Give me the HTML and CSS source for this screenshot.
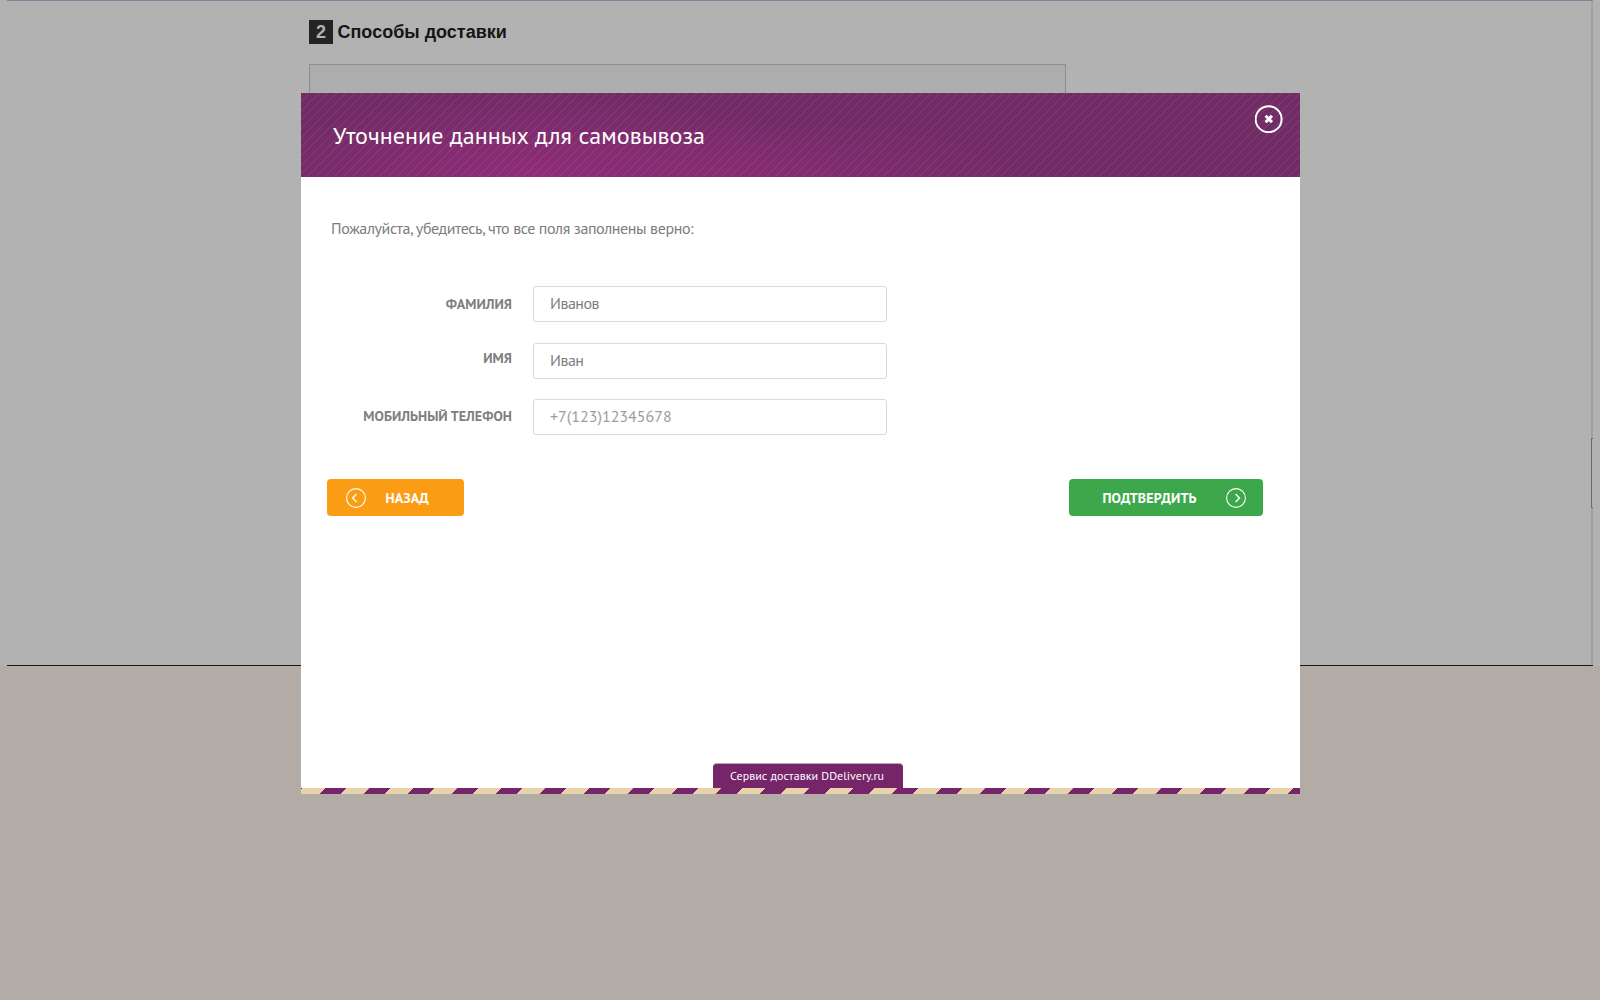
FILE: index.html
```html
<!DOCTYPE html>
<html lang="ru">
<head>
<meta charset="utf-8">
<title>Уточнение данных для самовывоза</title>
<link rel="stylesheet" href="styles.css">
</head>
<body>
<div class="page">
  <div class="shop">
    <div class="step"><span class="step-num">2</span><h2 class="step-title">Способы доставки</h2></div>
    <div class="methods"></div>
    <div class="scroll-track"><div class="scroll-thumb"></div></div>
  </div>
</div>
<div class="modal">
  <header class="modal-head">
    <h1 class="title">Уточнение данных для самовывоза</h1>
    <button class="close" aria-label="Закрыть">
      <svg width="28" height="28" viewBox="0 0 28 28"><circle cx="13.6" cy="14.2" r="13" fill="none" stroke="#fff" stroke-width="2"/><path d="M10.6 10.8l6.4 6.4M17 10.8l-6.4 6.4" stroke="#fff" stroke-width="3"/></svg>
    </button>
  </header>
  <main class="modal-body">
    <p class="intro">Пожалуйста, убедитесь, что все поля заполнены верно:</p>
    <form class="form">
      <div class="row"><label class="label">ФАМИЛИЯ</label><div class="field">Иванов</div></div>
      <div class="row"><label class="label up">ИМЯ</label><div class="field">Иван</div></div>
      <div class="row"><label class="label last">МОБИЛЬНЫЙ ТЕЛЕФОН</label><div class="field phone">+7(123)12345678</div></div>
    </form>
    <div class="actions">
      <button class="btn back">
        <svg width="20" height="20" viewBox="0 0 20 20" fill="none" stroke="#fff"><circle cx="10" cy="10" r="9.4" stroke-width="1.1"/><path d="M10.5 6L6.6 10l3.9 4" stroke-width="1.4"/></svg>
        <span>НАЗАД</span>
      </button>
      <button class="btn confirm">
        <span>ПОДТВЕРДИТЬ</span>
        <svg width="20" height="20" viewBox="0 0 20 20" fill="none" stroke="#fff"><circle cx="10" cy="10" r="9.4" stroke-width="1.1"/><path d="M9.6 6l3.9 4-3.9 4" stroke-width="1.4"/></svg>
      </button>
    </div>
    <div class="tab">Сервис доставки DDelivery.ru</div>
  </main>
  <div class="stripe"></div>
</div>
</body>
</html>
```
FILE: styles.css
```css
* { box-sizing: border-box; }
body {
  margin: 0;
  width: 1600px;
  height: 1000px;
  overflow: hidden;
  position: relative;
  background: #b3aba5;
  font-family: "PT Sans", "Noto Sans", sans-serif;
}
h1, h2, p { margin: 0; }
button { border: 0; padding: 0; background: none; font-family: inherit; color: #fff; }
svg { display: block; flex: none; }
.page { height: 666px; padding: 0 7px; background: #b2b2b2; }
.shop {
  position: relative;
  height: 666px;
  padding: 19px 0 0 302px;
  border-top: 1px solid #7b8799;
  border-bottom: 1px solid #1b1716;
}
.step { display: flex; align-items: center; height: 24px; gap: 4.5px; }
.step-num { width: 24px; height: 24px; background: #242424; color: #b2b2b2; font: bold 18px/24px "Liberation Sans", sans-serif; text-align: center; }
.step-title { font: bold 18px/24px "Liberation Sans", Arial, sans-serif; color: #151515; }
.methods { width: 757px; height: 200px; margin-top: 20px; border: 1px solid #8d8d8d; background: #adadad; }
.scroll-track { position: absolute; right: 0; top: 0; width: 2px; height: 664px; background: #a1a1a1; padding-top: 437px; }
.scroll-thumb { height: 70px; border: 1px solid #6b6b6b; border-right: 0; background: #b0b0b0; }

.modal { position: absolute; left: 301px; top: 93px; width: 999px; height: 701px; background: #fff; }
.modal-head {
  height: 84px;
  display: flex;
  justify-content: space-between;
  padding: 0 17px 0 32px;
  background:
    linear-gradient(135deg, transparent 45%, rgba(255,255,255,.1) 45% 55%, transparent 55%) 0 0 / 9px 9px,
    radial-gradient(ellipse 300px 85px at 235px 100%, #8f2c79, rgba(143,44,121,0)),
    radial-gradient(ellipse 240px 60px at 490px 100%, rgba(143,44,121,.6), rgba(143,44,121,0)),
    #712b65;
}
.title { font-weight: 400; font-size: 24px; line-height: 86px; letter-spacing: .03px; color: #fff; white-space: nowrap; }
.close { height: 28px; margin-top: 12px; }
.modal-body { height: 611px; display: flex; flex-direction: column; }
.intro { margin: 39px 0 0 30px; height: 24px; font-size: 16px; line-height: 24px; letter-spacing: -.4px; color: #7d7d7d; white-space: nowrap; }
.form { display: grid; grid-template-rows: 36px 36px 36px; row-gap: 20.5px; margin: 46px 0 0; }
.row { display: flex; align-items: center; gap: 21px; }
.label { width: 211px; text-align: right; font-size: 14px; line-height: 36px; font-weight: 700; letter-spacing: .03px; color: #7f7f7f; white-space: nowrap; }
.label.up { margin-top: -5px; }
.label.last { margin-top: -2px; }
.field { width: 354px; height: 36px; padding-left: 16px; border: 1px solid #dadada; border-radius: 3px; font-size: 16px; line-height: 33px; letter-spacing: -.5px; color: #7f7f7f; white-space: nowrap; }
.phone { letter-spacing: 0; color: #9c9c9c; }
.actions { display: flex; justify-content: space-between; margin: 44px 37px 0 26px; }
.btn { height: 37px; display: flex; align-items: center; border-radius: 4px; font-size: 14px; font-weight: 700; letter-spacing: .1px; white-space: nowrap; }
.back { width: 137px; padding-left: 19px; gap: 19.5px; background: #fb9d14; }
.confirm { width: 194px; justify-content: space-between; padding: 0 17px 0 33.5px; background: #3da84b; }
.tab { width: 190px; height: 25px; margin: auto 0 0 412px; padding-left: 17px; border-top: 1px solid #b8a5b5; border-radius: 4px 4px 0 0; background: #752568; color: #fff; font-size: 12px; line-height: 24px; letter-spacing: .05px; white-space: nowrap; }
.stripe { height: 6px; background: repeating-linear-gradient(135deg, #752568 0 .9px, #e7d2ab .9px 17.3px, #752568 17.3px 31.113px); }
```
